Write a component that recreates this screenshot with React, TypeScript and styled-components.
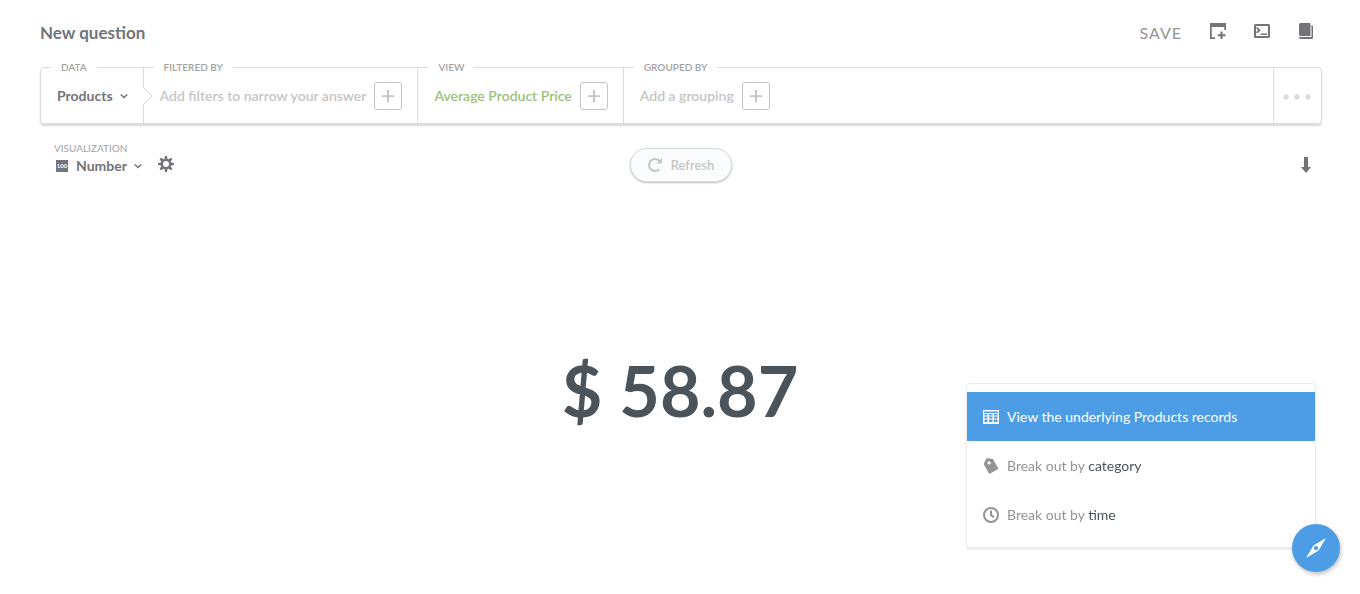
import React from "react";
import styled, { createGlobalStyle } from "styled-components";

const color = {
  brand: "#4c9de6",
  icon: "#727479",
  border: "#dcdcdc",
  faint: "#c5c5c5",
  label: "#a3a3a3",
  muted: "#949494",
  dark: "#4c545b",
  green: "#9cc177",
};

const GlobalStyle = createGlobalStyle`
  *, *::before, *::after { box-sizing: border-box; }
  body {
    margin: 0;
    background: #fff;
    color: ${color.icon};
    font-family: Lato, "Open Sans", sans-serif;
    font-size: 14px;
    line-height: 20px;
  }
  button { font: inherit; color: inherit; margin: 0; padding: 0; border: 0; background: none; cursor: pointer; }
  svg { display: block; flex: none; }
`;

const Page = styled.div`
  display: flex;
  flex-direction: column;
  min-height: 100vh;
`;

const Header = styled.header`
  display: flex;
  align-items: center;
  justify-content: space-between;
  padding: 21px 46px 22px 40px;
`;

const Title = styled.h1`
  margin: 0;
  font-size: 17px;
  line-height: 24px;
  font-weight: 700;
`;

const Actions = styled.div`
  display: flex;
  align-items: flex-start;
  gap: 28px;
`;

const SaveButton = styled.button`
  font-size: 16px;
  letter-spacing: 1px;
  color: ${color.muted};
`;

const IconButton = styled.button`
  display: flex;
  align-items: center;
  height: 16px;
`;

const QueryBar = styled.section`
  display: flex;
  height: 57px;
  margin: 0 38px 0 40px;
  border: 1px solid ${color.border};
  border-radius: 4px;
  box-shadow: 0 2px 2px rgba(0, 0, 0, 0.15);
`;

const Clause = styled.div<{ $grow?: boolean }>`
  position: relative;
  display: flex;
  align-items: center;
  gap: 8px;
  flex: ${(p) => (p.$grow ? "1" : "none")};
  padding: 1px 15px 0 16px;
  & + & { border-left: 1px solid ${color.border}; }
`;

const ClauseLabel = styled.span`
  position: absolute;
  top: -8px;
  left: 10px;
  padding: 0 10px;
  background: #fff;
  color: ${color.label};
  font-size: 10px;
  line-height: 14px;
  font-weight: 600;
  text-transform: uppercase;
  white-space: nowrap;
`;

const ClauseArrow = styled.svg`
  position: absolute;
  top: 19px;
  left: -1px;
`;

const ClauseText = styled.button<{ $tone: string }>`
  font-weight: 600;
  white-space: nowrap;
  color: ${(p) => p.$tone};
`;

const PickerButton = styled.button`
  display: flex;
  align-items: center;
  gap: 7px;
  font-weight: 700;
`;

const AddButton = styled.button`
  display: flex;
  align-items: center;
  justify-content: center;
  width: 28px;
  height: 28px;
  border: 1px solid ${color.faint};
  border-radius: 3px;
  color: ${color.faint};
`;

const MoreButton = styled.button`
  display: flex;
  align-items: center;
  justify-content: center;
  width: 48px;
  padding: 2px 2px 0 0;
  border-left: 1px solid ${color.border};
  color: ${color.border};
`;

const Toolbar = styled.div`
  display: grid;
  grid-template-columns: 1fr auto 1fr;
  align-items: start;
  padding: 16px 46px 0 48px;
`;

const VisualizationSettings = styled.div`
  display: flex;
  align-items: flex-start;
  gap: 16px;
  padding-left: 6px;
`;

const VisualizationLabel = styled.div`
  color: ${color.label};
  font-size: 10px;
  line-height: 16px;
  text-transform: uppercase;
`;

const VisualizationPicker = styled(PickerButton)`
  padding-left: 2px;
`;

const SettingsButton = styled(IconButton)`
  margin-top: 16px;
`;

const RefreshButton = styled.button`
  display: flex;
  align-items: center;
  gap: 8px;
  height: 34px;
  padding: 0 17px 0 16px;
  margin-top: 8px;
  border: 1px solid #d8dadc;
  border-radius: 17px;
  background: #fbfcfe;
  box-shadow: 0 1px 2px rgba(0, 0, 0, 0.25);
  color: ${color.faint};
  font-size: 13px;
  font-weight: 600;
`;

const DownloadButton = styled(IconButton)`
  justify-self: end;
  margin-top: 17px;
`;

const Result = styled.main`
  flex: 1;
  display: flex;
  align-items: center;
  justify-content: center;
  padding-top: 4px;
  color: ${color.dark};
  font-size: 70px;
  line-height: 84px;
  font-weight: 700;
`;

const ActionMenu = styled.div`
  position: fixed;
  right: 44px;
  bottom: 46px;
  width: 350px;
  padding: 8px 0;
  background: #fff;
  border: 1px solid #ececec;
  border-radius: 4px;
  box-shadow: 0 2px 2px rgba(0, 0, 0, 0.08);
`;

const ActionItem = styled.button<{ $active?: boolean }>`
  display: flex;
  align-items: center;
  gap: 8px;
  width: 100%;
  height: 49px;
  padding: 0 16px;
  text-align: left;
  background: ${(p) => (p.$active ? color.brand : "transparent")};
  color: ${(p) => (p.$active ? "#fff" : color.muted)};
`;

const Dimension = styled.span`
  color: ${color.dark};
`;

const CompassButton = styled.button`
  position: fixed;
  right: 20px;
  bottom: 22px;
  display: flex;
  align-items: center;
  justify-content: center;
  width: 48px;
  height: 48px;
  border-radius: 50%;
  background: ${color.brand};
  color: #fff;
  box-shadow: 1px 2px 4px rgba(0, 0, 0, 0.25);
`;

const paths = {
  chevron: "M1 12 L16 26 L31 12 L27 8 L16 18 L5 8 z",
  add: "M18.5 14 V2 H13.5 V14 H2 V18.5 H13.5 V30 H18.5 V18.5 H30 V14 z",
  gear: "M14 0 H18 L19 6 L20.707 6.707 L26 3.293 L28.707 6 L25.293 11.293 L26 13 L32 14 V18 L26 19 L25.293 20.707 L28.707 26 L26 28.707 L20.707 25.293 L19 26 L18 32 L14 32 L13 26 L11.293 25.293 L6 28.707 L3.293 26 L6.707 20.707 L6 19 L0 18 L0 14 L6 13 L6.707 11.293 L3.293 6 L6 3.293 L11.293 6.707 L13 6 L14 0 z M16 10 A6 6 0 0 0 16 22 A6 6 0 0 0 16 10",
  refresh: "M16 2 A14 14 0 0 0 2 16 A14 14 0 0 0 16 30 A14 14 0 0 0 26 26 L23.25 23 A10 10 0 0 1 16 26 A10 10 0 0 1 6 16 A10 10 0 0 1 16 6 A10 10 0 0 1 23.25 9 L19 13 L30 13 L30 2 L26 6 A14 14 0 0 0 16 2",
  download: "M12 20 V0 H20 V20 H26 L16 32 L6 20 z",
  dashboard: "M0 0 H32 V14 H28.5 V8 H3.5 V28.5 H10 V32 H0 z M21 17 H25 V22.5 H31 V26.5 H25 V32 H21 V26.5 H15.5 V22.5 H21 z",
  sql: "M3 2 H29 Q32 2 32 5 V27 Q32 30 29 30 H3 Q0 30 0 27 V5 Q0 2 3 2 z M4 6 V26 H28 V6 z M6.5 8 L13.5 14.5 L6.5 21 L4 18.5 L8.5 14.5 L4 10.5 z M13 21 H26 V24 H13 z",
  reference: "M5 0 H23 Q25 0 25 2 V26 H5 Q2 26 2 23 V3 Q2 0 5 0 z M27 4 Q30 4 30 7 V29 Q30 32 27 32 H6 Q2 32 2 28 H27 z",
  table: "M0 2 H32 V30 H0 z M2 5 V8 H30 V5 z M3 10 V13 H9 V10 z M12 10 V13 H19 V10 z M22 10 V13 H29 V10 z M3 15 V19 H9 V15 z M12 15 V19 H19 V15 z M22 15 V19 H29 V15 z M3 21 V26 H9 V21 z M12 21 V26 H19 V21 z M22 21 V26 H29 V21 z",
  tag: "M14.577 31.042a2.005 2.005 0 0 1-2.738-.733L1.707 12.759c-.277-.477-.298-1.265-.049-1.757L6.45 1.537C6.7 1.044 7.35.67 7.9.7l10.593.582c.551.03 1.22.44 1.498.921l10.132 17.55a2.002 2.002 0 0 1-.734 2.737l-14.812 8.552z M14.792 8.279a3.016 3.016 0 1 0-5.224 3.016 3.016 3.016 0 0 0 5.224-3.016z",
  clock: "M16 0 A16 16 0 0 0 0 16 A16 16 0 0 0 16 32 A16 16 0 0 0 32 16 A16 16 0 0 0 16 0 M16 4 A12 12 0 0 1 28 16 A12 12 0 0 1 16 28 A12 12 0 0 1 4 16 A12 12 0 0 1 16 4 M14 7 V17.25 L21 22 L23.25 19 L18 15 V7 z",
  compass: "M32 0 L20 20 L0 32 L12 12 z M16 12.6 A3.4 3.4 0 0 0 16 19.4 A3.4 3.4 0 0 0 16 12.6",
};

function Icon({ name, size = 16 }: { name: keyof typeof paths; size?: number }) {
  return (
    <svg width={size} height={size} viewBox="0 0 32 32" fill="currentColor" fillRule="evenodd" aria-hidden="true">
      <path d={paths[name]} />
    </svg>
  );
}

function NumberIcon() {
  return (
    <svg width="13" height="12" viewBox="0 0 13 12" aria-hidden="true">
      <rect width="12" height="12" fill={color.icon} />
      <text x="6" y="8" textAnchor="middle" fontSize="6" fontWeight="700" fill="#fff">100</text>
    </svg>
  );
}

function Add({ label }: { label: string }) {
  return (
    <AddButton aria-label={label}>
      <Icon name="add" size={14} />
    </AddButton>
  );
}

export default function App() {
  return (
    <Page>
      <GlobalStyle />
      <Header>
        <Title>New question</Title>
        <Actions>
          <SaveButton>SAVE</SaveButton>
          <IconButton aria-label="Add to dashboard"><Icon name="dashboard" /></IconButton>
          <IconButton aria-label="View the SQL"><Icon name="sql" /></IconButton>
          <IconButton aria-label="Data reference"><Icon name="reference" /></IconButton>
        </Actions>
      </Header>

      <QueryBar aria-label="Query">
        <Clause>
          <ClauseLabel>Data</ClauseLabel>
          <PickerButton aria-haspopup="listbox">
            Products
            <Icon name="chevron" size={8} />
          </PickerButton>
        </Clause>
        <Clause>
          <ClauseLabel>Filtered by</ClauseLabel>
          <ClauseArrow width="10" height="18" viewBox="0 0 10 18" aria-hidden="true">
            <path d="M0 0 L9 9 L0 18" fill="#fff" stroke={color.border} />
          </ClauseArrow>
          <ClauseText $tone={color.faint}>Add filters to narrow your answer</ClauseText>
          <Add label="Add a filter" />
        </Clause>
        <Clause>
          <ClauseLabel>View</ClauseLabel>
          <ClauseText $tone={color.green}>Average Product Price</ClauseText>
          <Add label="Add a metric" />
        </Clause>
        <Clause $grow>
          <ClauseLabel>Grouped by</ClauseLabel>
          <ClauseText $tone={color.faint}>Add a grouping</ClauseText>
          <Add label="Add a grouping" />
        </Clause>
        <MoreButton aria-label="More options">
          <svg width="28" height="6" viewBox="0 0 28 6" fill="currentColor" aria-hidden="true">
            <circle cx="3" cy="3" r="2.7" />
            <circle cx="14" cy="3" r="2.7" />
            <circle cx="25" cy="3" r="2.7" />
          </svg>
        </MoreButton>
      </QueryBar>

      <Toolbar>
        <VisualizationSettings>
          <div>
            <VisualizationLabel>Visualization</VisualizationLabel>
            <VisualizationPicker aria-haspopup="listbox">
              <NumberIcon />
              Number
              <Icon name="chevron" size={8} />
            </VisualizationPicker>
          </div>
          <SettingsButton aria-label="Settings"><Icon name="gear" /></SettingsButton>
        </VisualizationSettings>
        <RefreshButton>
          <Icon name="refresh" />
          Refresh
        </RefreshButton>
        <DownloadButton aria-label="Download"><Icon name="download" /></DownloadButton>
      </Toolbar>

      <Result>$ 58.87</Result>

      <ActionMenu>
        <ActionItem $active>
          <Icon name="table" />
          View the underlying Products records
        </ActionItem>
        <ActionItem>
          <Icon name="tag" />
          <span>Break out by <Dimension>category</Dimension></span>
        </ActionItem>
        <ActionItem>
          <Icon name="clock" />
          <span>Break out by <Dimension>time</Dimension></span>
        </ActionItem>
      </ActionMenu>
      <CompassButton aria-label="Actions"><Icon name="compass" size={20} /></CompassButton>
    </Page>
  );
}
